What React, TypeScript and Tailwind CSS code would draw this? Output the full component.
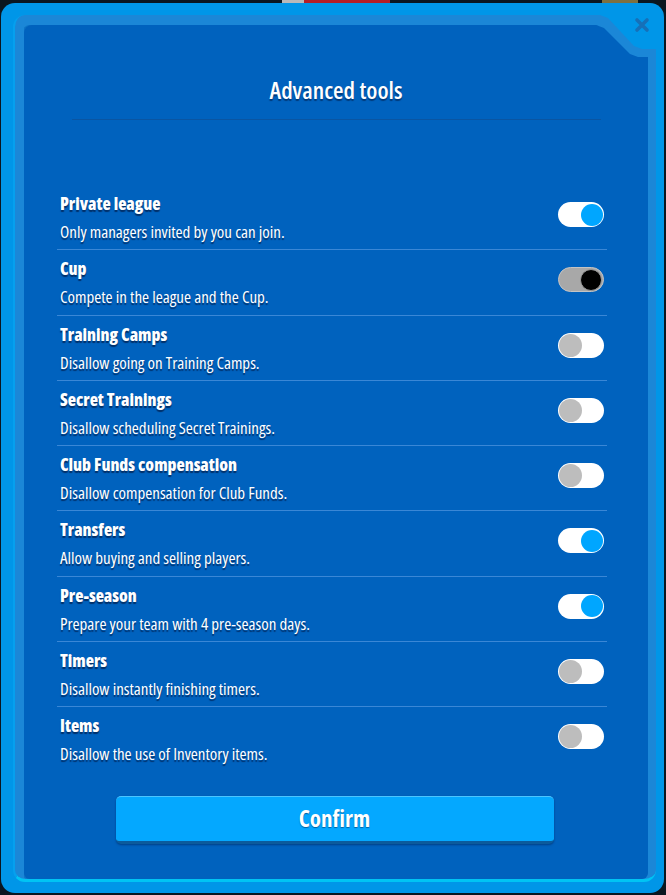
const rows: { title: string; desc: string; state: 'on' | 'off' | 'locked' }[] = [
  { title: 'Private league', desc: 'Only managers invited by you can join.', state: 'on' },
  { title: 'Cup', desc: 'Compete in the league and the Cup.', state: 'locked' },
  { title: 'Training Camps', desc: 'Disallow going on Training Camps.', state: 'off' },
  { title: 'Secret Trainings', desc: 'Disallow scheduling Secret Trainings.', state: 'off' },
  { title: 'Club Funds compensation', desc: 'Disallow compensation for Club Funds.', state: 'off' },
  { title: 'Transfers', desc: 'Allow buying and selling players.', state: 'on' },
  { title: 'Pre-season', desc: 'Prepare your team with 4 pre-season days.', state: 'on' },
  { title: 'Timers', desc: 'Disallow instantly finishing timers.', state: 'off' },
  { title: 'Items', desc: 'Disallow the use of Inventory items.', state: 'off' },
];

function Toggle({ state }: { state: 'on' | 'off' | 'locked' }) {
  if (state === 'locked') {
    return (
      <div className="w-[46px] h-[25px] rounded-full bg-[#a8a8a8] border border-[#c4c4c4] flex items-center justify-end pr-[1px]">
        <div className="w-[22px] h-[22px] rounded-full bg-black border-[1.5px] border-[#9a9a9a]" />
      </div>
    );
  }
  if (state === 'on') {
    return (
      <div className="w-[46px] h-[25px] rounded-full bg-white flex items-center justify-end pr-[1px]">
        <div className="w-[22px] h-[22px] rounded-full bg-[#00a6ff]" />
      </div>
    );
  }
  return (
    <div className="w-[46px] h-[25px] rounded-full bg-white flex items-center justify-start pl-[1px]">
      <div className="w-[23px] h-[23px] rounded-full bg-[#bdbdbd]" />
    </div>
  );
}

export default function App() {
  return (
    <div
      className="w-[666px] h-[895px] bg-[#0a1620] flex flex-col overflow-hidden [font-stretch:75%]"
      style={{ fontFamily: '"Open Sans", "Noto Sans", sans-serif' }}
    >
      <div className="h-[3px] flex shrink-0">
        <div className="w-[282px]" />
        <div className="w-[22px] bg-[#b9b9b9]" />
        <div className="w-[86px] bg-[#b51e28]" />
        <div className="w-[212px]" />
        <div className="w-[36px] bg-[#7d7040]" />
      </div>
      <div className="flex-1 ml-[1px] mr-[2px] mb-[2px] rounded-[14px] bg-[#0096e8] relative pt-[12px] pl-[12px] pr-[8px] pb-[11px] flex">
        <button className="absolute right-[14px] top-[14px] w-[16px] h-[16px]" aria-label="Close">
          <svg viewBox="0 0 16 16" className="w-[16px] h-[16px]">
            <path d="M3 3 L13 13 M13 3 L3 13" stroke="#1670b8" strokeWidth="3.6" strokeLinecap="round" />
          </svg>
        </button>
        <div className="flex-1 flex flex-col bg-[#1b87d7] rounded-[12px] pt-[10px] pl-[9px] pr-[8px] border-l-2 border-b-[3px] border-l-[#05a0ee] border-b-[#00c4f4] [clip-path:polygon(0_0,calc(100%_-_56px)_0,calc(100%_-_48px)_3px,calc(100%_-_22px)_31px,calc(100%_-_14px)_34px,100%_34px,100%_100%,0_100%)]">
          <div className="flex-1 flex flex-col bg-[#0062be] rounded-tl-[8px] rounded-tr-[6px] rounded-bl-[6px] rounded-br-[6px] shadow-[-2px_0_0_#0d74c6] pl-[33px] pr-[41px] [clip-path:polygon(0_0,calc(100%_-_52px)_0,calc(100%_-_44px)_3px,calc(100%_-_18px)_29px,calc(100%_-_10px)_32px,100%_32px,100%_100%,0_100%)]">
            <div className="pt-[50px] pl-[8px] h-[80px] shrink-0 text-center text-white text-[24px] leading-[30px] font-semibold [text-shadow:0_2px_1px_#003a7a]">
              Advanced tools
            </div>
            <div className="mt-[14px] ml-[15px] mr-[6px] h-px bg-[#0a55a2] shrink-0" />
            <div className="mt-[65px] flex flex-col">
              {rows.map((r, i) => (
                <div
                  key={r.title}
                  className={`h-[65.3px] shrink-0 flex items-start justify-between pl-[3px] pr-[3px] ${i < rows.length - 1 ? 'border-b border-[#3a87d6]' : ''}`}
                >
                  <div className="pt-[8px] flex flex-col text-white [text-shadow:0_2px_1px_#00306a]">
                    <div className="text-[17px] leading-[22px] font-extrabold">{r.title}</div>
                    <div className="mt-[6px] text-[17px] leading-[22px]">{r.desc}</div>
                  </div>
                  <div className="mt-[17px]">
                    <Toggle state={r.state} />
                  </div>
                </div>
              ))}
            </div>
            <div className="mt-[23px] flex justify-center pl-[5px]">
              <button className="w-[438px] h-[48px] rounded-[5px] bg-[#04a8ff] border-t border-t-[#4cc4ff] border-b-[3px] border-b-[#0b5b9c] text-white text-[23px] font-bold [text-shadow:0_1px_1px_#0060a0] shadow-[0_1px_2px_rgba(0,30,80,0.5)]">
                Confirm
              </button>
            </div>
          </div>
        </div>
      </div>
    </div>
  );
}
